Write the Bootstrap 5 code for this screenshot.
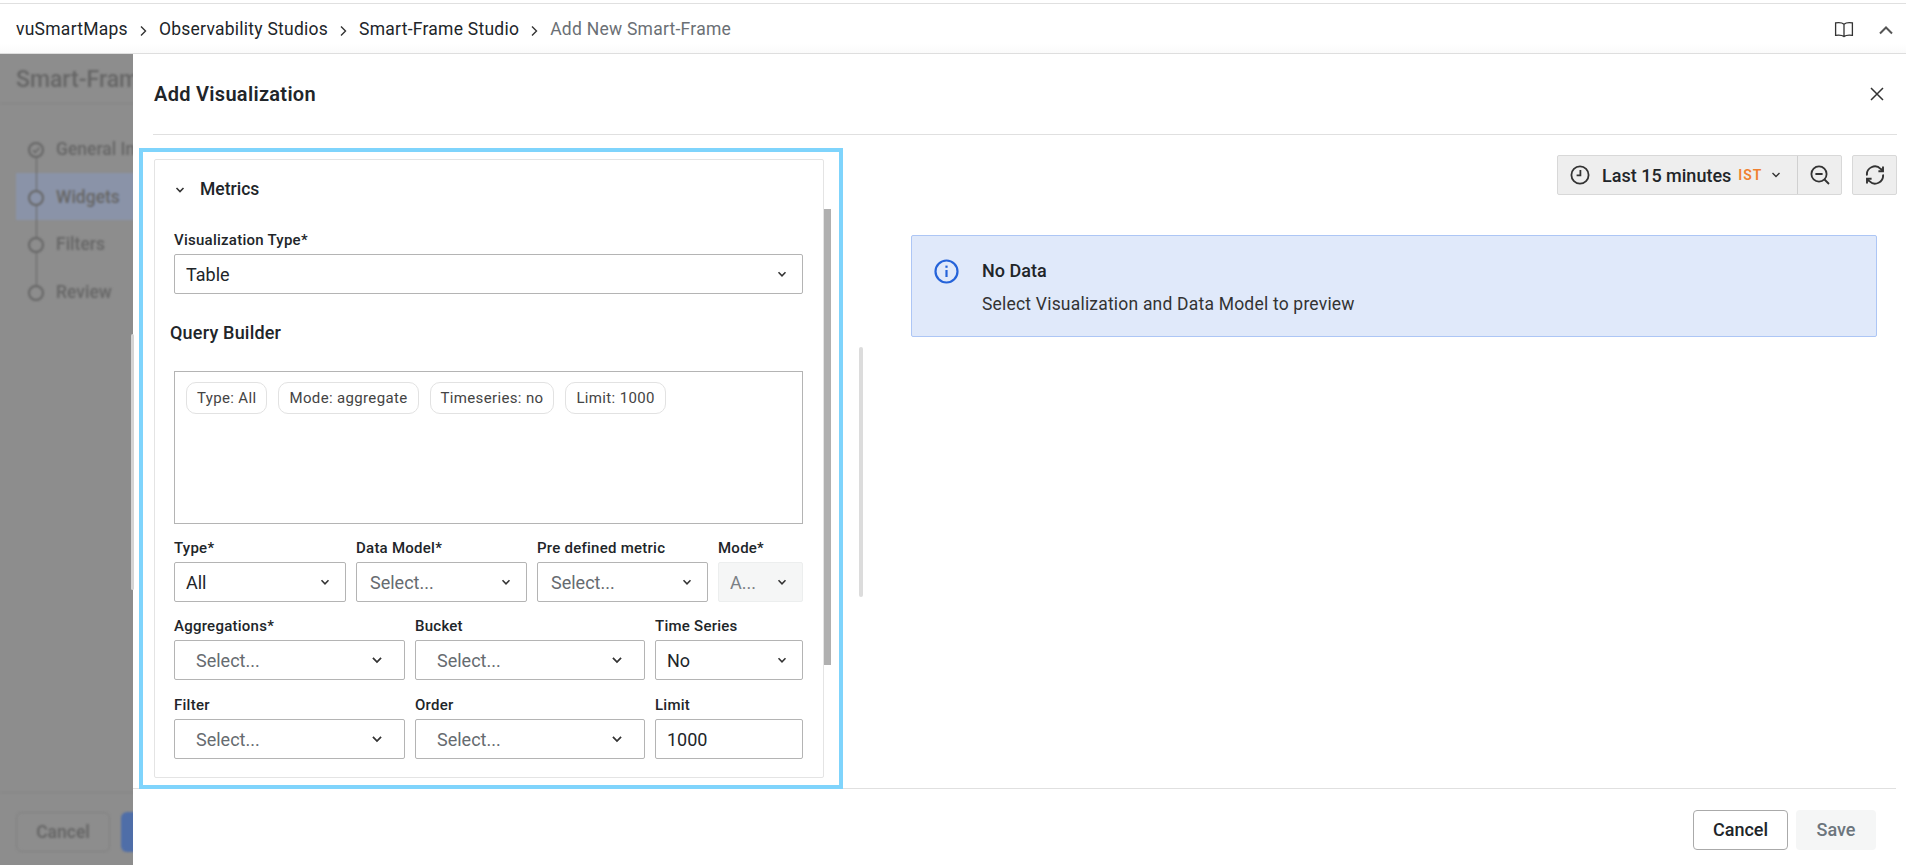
<!DOCTYPE html>
<html lang="en">
<head>
    <meta charset="UTF-8">
    <meta name="viewport" content="width=device-width, initial-scale=1.0">
    <link href="https://cdn.jsdelivr.net/npm/bootstrap@5.3.0/dist/css/bootstrap.min.css" rel="stylesheet">
    <title>Add Visualization</title>
    <style>
        html, body { height: 100%; }
        body { font-family: Roboto, "Liberation Sans", sans-serif; color: #212529; overflow: hidden; position: relative; font-size: 16px; }

        .top-bar { height: 51px; margin-top: 3px; border-top: 1px solid #e0e0e0; border-bottom: 1px solid #dedede; padding: 2px 12px 0 16px; background: linear-gradient(#fff 80%, #fafafa); }
        .top-bar .breadcrumb { --bs-breadcrumb-item-padding-x: 11px; --bs-breadcrumb-margin-bottom: 0; --bs-breadcrumb-item-active-color: #6b7075; --bs-breadcrumb-divider: url("data:image/svg+xml,%3Csvg xmlns='http://www.w3.org/2000/svg' width='9' height='12' viewBox='0 0 9 12'%3E%3Cpath d='M2 1.5 6.5 6 2 10.5' fill='none' stroke='%23333' stroke-width='1.4'/%3E%3C/svg%3E"); font-size: 17.5px; letter-spacing: .25px; }
        .top-bar .breadcrumb-item + .breadcrumb-item::before { padding-top: 7px; line-height: 1; }
        .top-bar a { color: #212529; text-decoration: none; }

        .studio-wrap { height: 811px; background: #8d8d8d; overflow: hidden; position: relative; }
        .studio-under { padding: 0 16px; filter: blur(1.2px); color: #666; font-weight: 500; }
        .studio-title { height: 50px; font-size: 23px; line-height: 52px; border-bottom: 1px solid #858585; margin: 0 -16px; padding-left: 16px; }
        .step-list { margin-top: 21px; font-size: 17.5px; }
        .step-item { height: 47.5px; position: relative; line-height: 49px; }
        .step-item.on { background: #8a93a8; margin-right: -16px; }
        .step-dot { position: absolute; left: 12px; top: 17px; width: 16px; height: 16px; border: 2px solid #666; border-radius: 50%; line-height: 0; }
        .step-item:not(:last-child)::after { content: ""; position: absolute; left: 19.5px; top: 33px; width: 1px; height: 32px; background: #666; z-index: 1; }
        .step-item span { padding-left: 40px; }
        .under-foot { position: absolute; left: 0; right: 0; top: 738px; border-top: 1px solid #858585; padding: 19px 16px; }
        .under-cancel { width: 94px; height: 40px; border: 1px solid #808080; color: #666; font-weight: 600; padding: 0; font-size: 17.5px; }
        .under-save { width: 60px; height: 40px; background: #4f6ea8; border: 0; margin-left: 3px; }

        .drawer { position: absolute; left: 133px; right: 0; top: 54px; bottom: 0; background: #fff; }
        .drawer-head { height: 81px; margin: 0 9px 0 20px; border-bottom: 1px solid #e0e0e0; }
        .drawer-head h5 { font-size: 20px; font-weight: 600; margin: 0 0 0 1px; letter-spacing: .3px; }
        .close-x { padding: 0; border: 0; background: none; line-height: 0; margin-right: 12px; }

        .drawer-body { height: 653px; }
        .left-pane { width: 710px; padding: 13px 0 0 6px; position: relative; }
        .focus-box { width: 704px; height: 641px; border: 4px solid #7fd4fc; padding: 7px 15px 7px 11px; position: relative; }
        .metrics-card { height: 100%; border: 1px solid #e4e4e4; border-radius: 2px; padding: 0 20px 0 19px; }
        .metrics-head { height: 47px; padding-top: 12px; font-size: 17.5px; font-weight: 500; }
        .metrics-head svg { margin-right: 15px; margin-left: 1px; }
        .fld-label { display: block; font-size: 15px; font-weight: 500; line-height: 20px; margin-bottom: 4px; letter-spacing: .25px; white-space: nowrap; }
        .fld-first { margin-top: 23px; }
        .form-select, .form-control { height: 40px; border-radius: 2px; border-color: #b4b4b4; color: #212529; font-size: 18px; padding: 0 11px; box-shadow: none; }
        .form-select { background-image: url("data:image/svg+xml,%3Csvg xmlns='http://www.w3.org/2000/svg' viewBox='0 0 12 12'%3E%3Cpath d='M2.5 4.2 6 7.8l3.5-3.6' fill='none' stroke='%23333' stroke-width='1.5'/%3E%3C/svg%3E"); background-size: 12px 12px; background-position: right 14px center; }
        .form-select.is-empty { color: #666b70; padding-left: 13px; }
        .form-select.is-wide { padding-left: 21px; background-size: 14px 14px; background-position: right 20px center; }
        .form-select:disabled { background-color: #f5f6f6; border-color: #eceeee; color: #7b8085; }
        .qb-title { font-size: 18px; font-weight: 500; margin: 27px 0 26px -4px; line-height: 24px; letter-spacing: .2px; }
        .qb-box { height: 153px; border: 1px solid #b4b4b4; padding: 10px 11px; column-gap: 11px; }
        .qb-chip { height: 32px; line-height: 30px; border: 1px solid #e2e2e2; border-radius: 10px; padding: 0 10px; font-size: 15px; color: #444; letter-spacing: .35px; }
        .qb-row { display: grid; column-gap: 10px; margin-top: 14px; }
        .qb-row.four { grid-template-columns: 172px 171px 171px 85px; }
        .qb-row.three { grid-template-columns: 231px 230px 148px; }
        .qb-row.last { margin-top: 15px; }
        .scroll-a { position: absolute; left: 681px; top: 57px; width: 7px; height: 456px; background: #b0b0b0; }
        .scroll-b { position: absolute; left: 726px; top: 212px; width: 4px; height: 250px; background: #dcdcdc; border-radius: 2px; }
        .scroll-c { position: absolute; left: -2px; top: 199px; width: 3px; height: 256px; background: #d4d4d4; border-radius: 2px; }

        .right-pane { padding: 20px 9px 0 68px; }
        .time-group { height: 40px; background: #eee; border: 1px solid #d8d8d8; border-radius: 2px; }
        .time-main { width: 240px; padding-left: 12px; border-right: 1px solid #d0d0d0; font-weight: 500; font-size: 18px; }
        .time-main svg:first-child { margin-right: 12px; }
        .time-zone { color: #f08030; font-size: 14px; font-weight: 600; letter-spacing: 1px; margin: 0 9px 0 7px; }
        .time-zoom { width: 43px; }
        .time-refresh { width: 45px; height: 40px; margin-left: 10px; }
        .info-alert { --bs-alert-bg: #e0e9fa; --bs-alert-border-color: #adc6f5; --bs-alert-border-radius: 2px; --bs-alert-margin-bottom: 0; --bs-alert-padding-x: 22px; --bs-alert-padding-y: 21px; margin-top: 40px; height: 102px; width: 966px; color: #212529; }
        .info-alert strong { font-weight: 500; line-height: 28px; display: block; font-size: 18px; }
        .info-alert div div { line-height: 24px; margin-top: 7px; font-size: 17.5px; letter-spacing: .2px; color: #333; }
        .info-alert svg { margin-right: 23px; margin-top: 2px; }

        .drawer-foot { height: 77px; margin-right: 10px; border-top: 1px solid #e0e0e0; padding-right: 20px; padding-top: 5px; }
        .foot-btn { height: 40px; font-weight: 500; font-size: 18px; border-radius: 4px; padding: 0; }
        .foot-cancel { width: 95px; border: 1px solid #aaa; background: #fff; color: #212529; }
        .foot-save { width: 80px; border: 0; background: #f5f6f6; color: #6c757d; }
    </style>
</head>
<body>
    <header class="top-bar d-flex align-items-center justify-content-between">
        <nav aria-label="breadcrumb">
            <ol class="breadcrumb">
                <li class="breadcrumb-item"><a href="#">vuSmartMaps</a></li>
                <li class="breadcrumb-item"><a href="#">Observability Studios</a></li>
                <li class="breadcrumb-item"><a href="#">Smart-Frame Studio</a></li>
                <li class="breadcrumb-item active" aria-current="page">Add New Smart-Frame</li>
            </ol>
        </nav>
        <div class="d-flex align-items-center gap-4">
            <svg width="20" height="18" viewBox="0 0 20 18" fill="none" stroke="#333" stroke-width="1.3"><path d="M10 3.2C8.4 1.8 5 1.4 1.6 1.9v12.4c3.4-.5 6.8-.1 8.4 1.3 1.6-1.4 5-1.8 8.4-1.3V1.9C15 1.4 11.6 1.8 10 3.2Zm0 0v12.4"/></svg>
            <svg width="16" height="12" viewBox="0 0 16 12" fill="none" stroke="#555" stroke-width="2"><path d="M2 9.5 8 3.5l6 6"/></svg>
        </div>
    </header>

    <div class="studio-wrap">
        <div class="studio-under">
            <div class="studio-title">Smart-Frame</div>
            <div class="step-list">
                <div class="step-item">
                    <i class="step-dot"><svg width="12" height="12" viewBox="0 0 12 12" fill="none" stroke="#666" stroke-width="1.5"><path d="M3 6.2 5.2 8.4 9.2 3.8"/></svg></i>
                    <span>General Info</span>
                </div>
                <div class="step-item on"><i class="step-dot"></i><span>Widgets</span></div>
                <div class="step-item"><i class="step-dot"></i><span>Filters</span></div>
                <div class="step-item"><i class="step-dot"></i><span>Review</span></div>
            </div>
            <div class="under-foot d-flex gap-2">
                <button class="btn under-cancel">Cancel</button>
                <button class="btn under-save"></button>
            </div>
        </div>
    </div>

    <div class="drawer d-flex flex-column">
        <div class="drawer-head d-flex align-items-center justify-content-between">
            <h5>Add Visualization</h5>
            <button class="close-x" aria-label="Close">
                <svg width="16" height="16" viewBox="0 0 16 16" fill="none" stroke="#333" stroke-width="1.5"><path d="M2 2l12 12M14 2 2 14"/></svg>
            </button>
        </div>

        <div class="drawer-body d-flex">
            <div class="left-pane">
                <div class="focus-box">
                    <div class="metrics-card">
                        <div class="metrics-head d-flex align-items-center">
                            <svg width="10" height="10" viewBox="0 0 10 10" fill="none" stroke="#333" stroke-width="1.6"><path d="M1.5 3 5 6.5 8.5 3"/></svg>
                            Metrics
                        </div>
                        <label class="fld-label fld-first">Visualization Type*</label>
                        <select class="form-select"><option>Table</option></select>

                        <div class="qb-title">Query Builder</div>
                        <div class="qb-box d-flex align-items-start">
                            <span class="qb-chip">Type: All</span>
                            <span class="qb-chip">Mode: aggregate</span>
                            <span class="qb-chip">Timeseries: no</span>
                            <span class="qb-chip">Limit: 1000</span>
                        </div>

                        <div class="qb-row four">
                            <div><label class="fld-label">Type*</label><select class="form-select"><option>All</option></select></div>
                            <div><label class="fld-label">Data Model*</label><select class="form-select is-empty"><option>Select...</option></select></div>
                            <div><label class="fld-label">Pre defined metric</label><select class="form-select is-empty"><option>Select...</option></select></div>
                            <div><label class="fld-label">Mode*</label><select class="form-select" disabled><option>A...</option></select></div>
                        </div>
                        <div class="qb-row three">
                            <div><label class="fld-label">Aggregations*</label><select class="form-select is-empty is-wide"><option>Select...</option></select></div>
                            <div><label class="fld-label">Bucket</label><select class="form-select is-empty is-wide"><option>Select...</option></select></div>
                            <div><label class="fld-label">Time Series</label><select class="form-select"><option>No</option></select></div>
                        </div>
                        <div class="qb-row three last">
                            <div><label class="fld-label">Filter</label><select class="form-select is-empty is-wide"><option>Select...</option></select></div>
                            <div><label class="fld-label">Order</label><select class="form-select is-empty is-wide"><option>Select...</option></select></div>
                            <div><label class="fld-label">Limit</label><input class="form-control" value="1000"></div>
                        </div>
                    </div>
                    <div class="scroll-a"></div>
                </div>
                <div class="scroll-b"></div>
                <div class="scroll-c"></div>
            </div>

            <div class="right-pane flex-grow-1">
                <div class="d-flex justify-content-end">
                    <div class="time-group d-flex">
                        <div class="time-main d-flex align-items-center">
                            <svg width="20" height="20" viewBox="0 0 20 20" fill="none" stroke="#333" stroke-width="1.8"><circle cx="10" cy="10" r="8.6"/><path d="M10.4 5v5.4H6.6"/></svg>
                            Last 15 minutes
                            <span class="time-zone">IST</span>
                            <svg width="10" height="10" viewBox="0 0 10 10" fill="none" stroke="#333" stroke-width="1.4"><path d="M1.5 3 5 6.5 8.5 3"/></svg>
                        </div>
                        <div class="time-zoom d-flex align-items-center justify-content-center">
                            <svg width="20" height="20" viewBox="0 0 20 20" fill="none" stroke="#333" stroke-width="1.8"><circle cx="9" cy="9" r="7.6"/><path d="M5.4 9h7.2M14.5 14.5l4.5 4.5"/></svg>
                        </div>
                    </div>
                    <div class="time-group time-refresh d-flex align-items-center justify-content-center">
                        <svg width="20" height="20" viewBox="0 0 20 20" fill="none" stroke="#333" stroke-width="1.9"><path d="M2 10.5A8 8 0 0 1 15.6 3.8L18 6"/><path d="M18 9.5A8 8 0 0 1 4.4 16.2L2 14"/><path d="M18 1.6V6.2H13.4M2 18.4V13.8H6.6"/></svg>
                    </div>
                </div>
                <div class="alert info-alert d-flex align-items-start" role="alert">
                    <svg width="25" height="25" viewBox="0 0 25 25" fill="none" stroke="#2563d9" stroke-width="2.2"><circle cx="12.5" cy="12.5" r="11"/><path d="M12.5 11v7"/><path d="M12.5 6.6v2.2"/></svg>
                    <div>
                        <strong>No Data</strong>
                        <div>Select Visualization and Data Model to preview</div>
                    </div>
                </div>
            </div>
        </div>

        <div class="drawer-foot d-flex align-items-center justify-content-end gap-2">
            <button class="btn foot-btn foot-cancel">Cancel</button>
            <button class="btn foot-btn foot-save">Save</button>
        </div>
    </div>
</body>
</html>
